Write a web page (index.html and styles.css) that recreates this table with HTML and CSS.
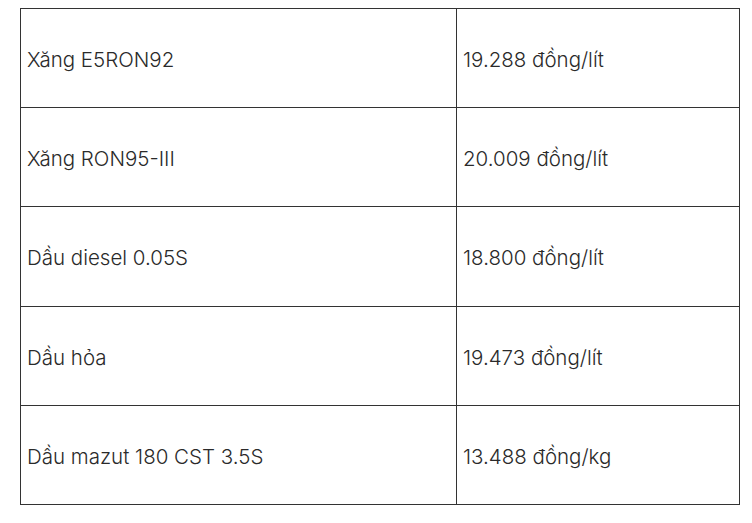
FILE: index.html
```html
<!DOCTYPE html>
<html lang="vi">
<head>
<meta charset="utf-8">
<link rel="stylesheet" href="styles.css">
</head>
<body>
<table class="price-table">
  <tbody>
    <tr><td class="name">Xăng E5RON92</td><td class="price">19.288 đồng/lít</td></tr>
    <tr><td class="name">Xăng RON95-III</td><td class="price">20.009 đồng/lít</td></tr>
    <tr><td class="name">Dầu diesel 0.05S</td><td class="price">18.800 đồng/lít</td></tr>
    <tr><td class="name">Dầu hỏa</td><td class="price">19.473 đồng/lít</td></tr>
    <tr><td class="name">Dầu mazut 180 CST 3.5S</td><td class="price">13.488 đồng/kg</td></tr>
  </tbody>
</table>
</body>
</html>
```
FILE: styles.css
```css
html, body {
  margin: 0;
  padding: 0;
  background: #fff;
}
body {
  padding: 8px 0 0 20px;
  font-family: Inter, "Noto Sans", sans-serif;
  font-size: 20.5px;
  font-weight: 300;
  color: #2a2a2a;
}
.price-table {
  border-collapse: collapse;
  width: 720px;
}
.price-table td {
  border: 1px solid #333;
  height: 99.2px;
  padding: 3px 6px 0;
  vertical-align: middle;
  box-sizing: border-box;
}
.price-table td.name {
  width: 436px;
}
```
